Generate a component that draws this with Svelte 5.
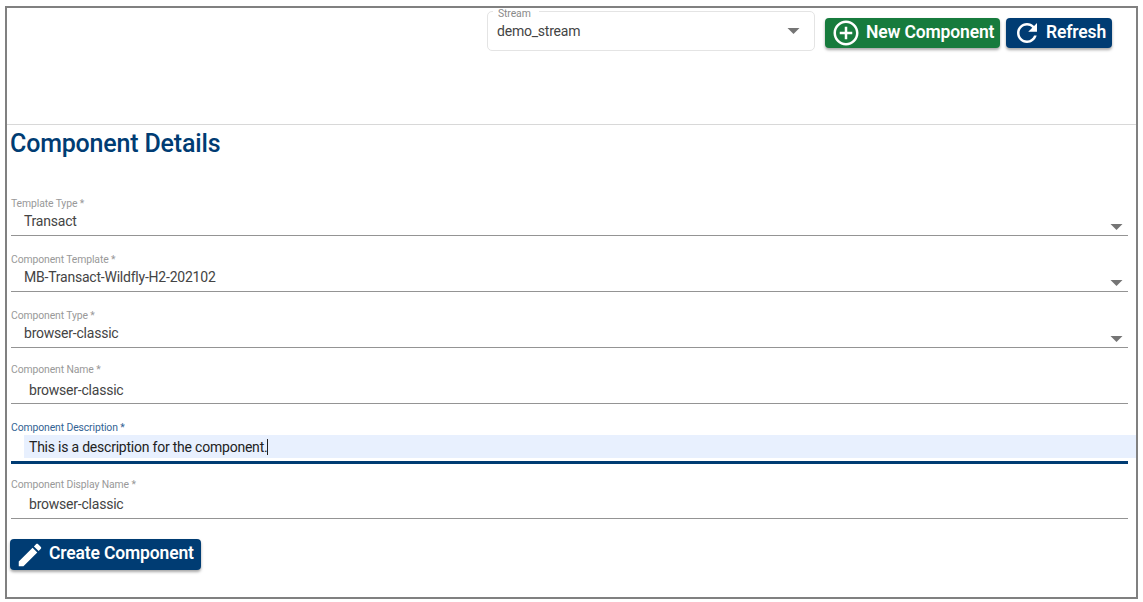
<script>
  const fields = [
    { label: 'Template Type *', value: 'Transact', kind: 'select' },
    { label: 'Component Template *', value: 'MB-Transact-Wildfly-H2-202102', kind: 'select' },
    { label: 'Component Type *', value: 'browser-classic', kind: 'select' },
    { label: 'Component Name *', value: 'browser-classic', kind: 'text' },
    { label: 'Component Description *', value: 'This is a description for the component.', kind: 'text focused' },
    { label: 'Component Display Name *', value: 'browser-classic', kind: 'text display' }
  ];
</script>

<div class="frame">
  <header>
    <div class="stream">
      <span class="legend">Stream</span>
      <span class="picked">demo_stream</span>
      <svg class="caret" width="13" height="6" viewBox="0 0 12 6"><path d="M0 0h12L6 6z" /></svg>
    </div>
    <button class="btn green">
      <svg width="30" height="30" viewBox="0 0 24 24"><path d="M13 7h-2v4H7v2h4v4h2v-4h4v-2h-4V7zm-1-5C6.480 2 2 6.480 2 12s4.480 10 10 10 10-4.480 10-10S17.520 2 12 2zm0 18c-4.410 0-8-3.590-8-8s3.590-8 8-8 8 3.590 8 8-3.590 8-8 8z" /></svg>
      <span>New Component</span>
    </button>
    <button class="btn refresh">
      <svg width="30" height="30" viewBox="0 0 24 24"><path d="M17.650 6.350C16.200 4.900 14.210 4 12 4c-4.420 0-7.990 3.580-7.990 8s3.570 8 7.990 8c3.730 0 6.840-2.550 7.730-6h-2.080c-.82 2.330-3.040 4-5.650 4-3.310 0-6-2.690-6-6s2.690-6 6-6c1.660 0 3.140.69 4.220 1.780L13 11h7V4l-2.350 2.350z" /></svg>
      <span>Refresh</span>
    </button>
  </header>
  <main>
    <h1>Component Details</h1>
    <form>
      {#each fields as f}
        <div class="field {f.kind}">
          <span class="label">{f.label}</span>
          <div class="value">
            <span class="content">{f.value}</span>
            {#if f.kind === 'select'}
              <svg class="caret" width="13" height="6" viewBox="0 0 12 6"><path d="M0 0h12L6 6z" /></svg>
            {/if}
          </div>
        </div>
      {/each}
      <button class="btn create" type="button">
        <svg width="30" height="30" viewBox="0 0 24 24"><path d="M3 17.250V21h3.750L17.810 9.940l-3.750-3.750L3 17.250zM20.710 7.040c.39-.39.39-1.020 0-1.410l-2.340-2.340c-.39-.39-1.020-.39-1.410 0l-1.830 1.830 3.750 3.750 1.830-1.830z" /></svg>
        <span>Create Component</span>
      </button>
    </form>
  </main>
</div>

<style>
  :global(body) {
    background: #fff;
  }
  .frame {
    box-sizing: border-box;
    width: 1133px;
    height: 593px;
    margin: 6px 0 0 5px;
    border: 2px solid #808080;
    font-family: Roboto, sans-serif;
    color: #444;
  }
  header {
    box-sizing: border-box;
    height: 117px;
    display: flex;
    align-items: flex-start;
    justify-content: flex-end;
    padding: 3px 24px 0 0;
    border-bottom: 1px solid #d8d8d8;
  }
  .stream {
    position: relative;
    box-sizing: border-box;
    width: 328px;
    height: 40px;
    margin-right: 10px;
    padding: 0 14px 0 9px;
    display: flex;
    align-items: center;
    justify-content: space-between;
    border: 1px solid #e4e4e4;
    border-radius: 5px;
    font-size: 14px;
    letter-spacing: -0.220px;
  }
  .legend {
    position: absolute;
    left: 5px;
    top: -3px;
    padding: 0 8px 0 5px;
    background: #fff;
    font-size: 10.400px;
    letter-spacing: -0.100px;
    line-height: 10px;
    color: #8a8a8a;
  }
  .caret {
    flex: none;
    fill: #757575;
  }
  .btn {
    box-sizing: border-box;
    display: flex;
    align-items: center;
    height: 30px;
    padding: 0;
    border: 0;
    border-radius: 4px;
    background: #003c73;
    color: #fff;
    font: 600 17.500px/30px Roboto, sans-serif;
    letter-spacing: -0.150px;
    white-space: nowrap;
    box-shadow: 0 2px 3px rgba(0, 0, 0, 0.35);
  }
  .btn span {
    margin-top: -3px;
  }
  .btn svg {
    flex: none;
    fill: #fff;
  }
  .green {
    width: 175px;
    margin: 7px 6px 0 0;
    padding-left: 6px;
    gap: 5px;
    background: #177b3d;
  }
  .refresh {
    width: 106px;
    margin-top: 7px;
    padding-left: 6px;
    gap: 4px;
  }
  main {
    padding: 0 8px 0 4px;
  }
  h1 {
    margin: 0 0 0 -1px;
    padding-top: 4px;
    height: 66px;
    font-size: 25px;
    font-weight: 500;
    letter-spacing: -0.180px;
    line-height: 30px;
    color: #003c73;
  }
  .field {
    box-sizing: border-box;
    height: 56px;
    display: flex;
    flex-direction: column;
    justify-content: flex-end;
    border-bottom: 1px solid #949494;
  }
  form .field:first-child {
    height: 41px;
  }
  .label {
    font-size: 10.400px;
    letter-spacing: -0.110px;
    line-height: 12px;
    color: #999;
  }
  .value {
    display: flex;
    align-items: center;
    justify-content: space-between;
    height: 25px;
    padding: 0 5px 0 13px;
    font-size: 14px;
    letter-spacing: -0.220px;
    line-height: 24px;
  }
  .select .content {
    margin-top: -3px;
  }
  .select .caret {
    margin-top: 9px;
  }
  .text .value {
    padding-left: 18px;
    height: 27px;
  }
  .text.focused {
    height: 60px;
    border-bottom: 3px solid #003c73;
  }
  .text.focused .value {
    height: 23px;
    margin: 1px -8px 3px 13px;
    padding-left: 5px;
    background: #e8f0fe;
    color: #222;
  }
  .focused .label {
    color: #336394;
  }
  .focused .content {
    margin-top: 1px;
    border-right: 1px solid #222;
    line-height: 16px;
  }
  .display {
    height: 55px;
  }
  .display .content {
    margin-top: -2px;
  }
  .create {
    width: 191px;
    height: 31px;
    margin: 20px 0 0 -1px;
    padding-left: 5px;
    gap: 4px;
  }
</style>
